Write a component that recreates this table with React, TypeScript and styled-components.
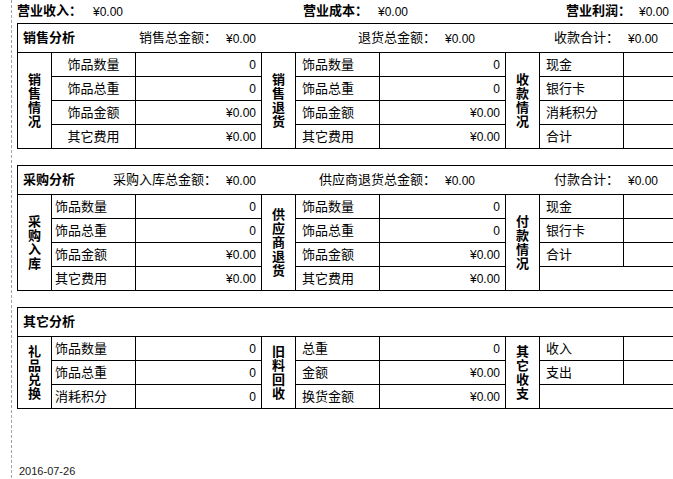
import React from "react";
import styled, { createGlobalStyle } from "styled-components";

const GlobalStyle = createGlobalStyle`
  html, body {
    margin: 0;
    padding: 0;
    overflow: hidden;
    background: #fff;
  }
  body {
    font-family: "Liberation Sans", "Noto Sans CJK SC", sans-serif;
    color: #000;
    line-height: 14px;
  }
`;

const Page = styled.div`
  min-height: 479px;
  padding-left: 17px;
  box-sizing: border-box;
  background-image: repeating-linear-gradient(
    to bottom,
    #a3a3a3 0px,
    #a3a3a3 3px,
    transparent 3px,
    transparent 5px
  );
  background-size: 1px 100%;
  background-position: 11px 0;
  background-repeat: no-repeat;
`;

const TopBar = styled.div`
  display: grid;
  grid-template-columns: 76px 210px 75px 188px 73px 1fr;
  height: 23px;
  align-items: center;
`;

const TopLabel = styled.span`
  font-size: 13px;
  font-weight: bold;
  white-space: nowrap;
  padding-bottom: 2px;
`;

const Money = styled.span`
  font-size: 12px;
  white-space: nowrap;
`;

const Section = styled.section`
  width: 720px;
  border: 1px solid #000;
  margin-bottom: 16px;
`;

const SectionHeader = styled.div`
  display: grid;
  grid-template-columns: 87px 112px 83px 136px 84px 99px 1fr;
  height: 28px;
  align-items: center;
  font-size: 13px;
  white-space: nowrap;
`;

const SectionTitle = styled.span`
  font-weight: bold;
  padding-left: 5px;
`;

const HeaderLabel = styled.span`
  text-align: right;
`;

const HeaderValue = styled(Money)`
  padding-left: 9px;
  padding-top: 1px;
`;

const Table = styled.div<{ $rows: number }>`
  display: grid;
  grid-template-columns: 33px 83px 125px 33px 83px 125px 33px 83px 1fr;
  grid-template-rows: repeat(${(p) => p.$rows}, 23px);
  gap: 1px;
  background: #000;
  border-top: 1px solid #000;
`;

const Cell = styled.div`
  background: #fff;
  display: flex;
  align-items: center;
  white-space: nowrap;
  overflow: hidden;
`;

const GroupLabel = styled(Cell)<{ $span: number }>`
  grid-row: span ${(p) => p.$span};
  flex-direction: column;
  justify-content: center;
  font-size: 13px;
  font-weight: bold;
  line-height: 14px;
`;

const ItemLabel = styled(Cell)<{ $align: "center" | "narrow" | "left" }>`
  font-size: 13px;
  justify-content: ${(p) => (p.$align === "center" ? "center" : "flex-start")};
  padding-left: ${(p) =>
    p.$align === "center" ? "0" : p.$align === "narrow" ? "3px" : "6px"};
`;

const ItemValue = styled(Cell)`
  font-size: 12px;
  justify-content: flex-end;
  padding-right: 5px;
`;

const Filler = styled(Cell)`
  grid-column: span 2;
`;

const DateLine = styled.div`
  margin-top: 56px;
  padding-left: 2px;
  font-size: 11px;
  line-height: 13px;
  color: #1a1a1a;
`;

type Item = { label: string; value?: string };
type Group = { title: string; items: Item[]; align: "center" | "narrow" | "left" };
type SectionData = {
  title: string;
  stats: [string, string][];
  rows: number;
  groups: Group[];
};

const sections: SectionData[] = [
  {
    title: "销售分析",
    stats: [
      ["销售总金额：", "¥0.00"],
      ["退货总金额：", "¥0.00"],
      ["收款合计：", "¥0.00"],
    ],
    rows: 4,
    groups: [
      {
        title: "销售情况",
        align: "center",
        items: [
          { label: "饰品数量", value: "0" },
          { label: "饰品总重", value: "0" },
          { label: "饰品金额", value: "¥0.00" },
          { label: "其它费用", value: "¥0.00" },
        ],
      },
      {
        title: "销售退货",
        align: "left",
        items: [
          { label: "饰品数量", value: "0" },
          { label: "饰品总重", value: "0" },
          { label: "饰品金额", value: "¥0.00" },
          { label: "其它费用", value: "¥0.00" },
        ],
      },
      {
        title: "收款情况",
        align: "left",
        items: [
          { label: "现金", value: "" },
          { label: "银行卡", value: "" },
          { label: "消耗积分", value: "" },
          { label: "合计", value: "" },
        ],
      },
    ],
  },
  {
    title: "采购分析",
    stats: [
      ["采购入库总金额：", "¥0.00"],
      ["供应商退货总金额：", "¥0.00"],
      ["付款合计：", "¥0.00"],
    ],
    rows: 4,
    groups: [
      {
        title: "采购入库",
        align: "narrow",
        items: [
          { label: "饰品数量", value: "0" },
          { label: "饰品总重", value: "0" },
          { label: "饰品金额", value: "¥0.00" },
          { label: "其它费用", value: "¥0.00" },
        ],
      },
      {
        title: "供应商退货",
        align: "left",
        items: [
          { label: "饰品数量", value: "0" },
          { label: "饰品总重", value: "0" },
          { label: "饰品金额", value: "¥0.00" },
          { label: "其它费用", value: "¥0.00" },
        ],
      },
      {
        title: "付款情况",
        align: "left",
        items: [
          { label: "现金", value: "" },
          { label: "银行卡", value: "" },
          { label: "合计", value: "" },
        ],
      },
    ],
  },
  {
    title: "其它分析",
    stats: [],
    rows: 3,
    groups: [
      {
        title: "礼品兑换",
        align: "narrow",
        items: [
          { label: "饰品数量", value: "0" },
          { label: "饰品总重", value: "0" },
          { label: "消耗积分", value: "0" },
        ],
      },
      {
        title: "旧料回收",
        align: "left",
        items: [
          { label: "总重", value: "0" },
          { label: "金额", value: "¥0.00" },
          { label: "换货金额", value: "¥0.00" },
        ],
      },
      {
        title: "其它收支",
        align: "left",
        items: [
          { label: "收入", value: "" },
          { label: "支出", value: "" },
        ],
      },
    ],
  },
];

function renderTable(s: SectionData) {
  const cells: React.ReactNode[] = [];
  for (let r = 0; r < s.rows; r++) {
    s.groups.forEach((g, gi) => {
      if (r === 0) {
        cells.push(
          <GroupLabel key={`g${gi}`} $span={s.rows}>
            {Array.from(g.title).map((ch, i) => (
              <span key={i}>{ch}</span>
            ))}
          </GroupLabel>
        );
      }
      const item = g.items[r];
      if (item) {
        cells.push(
          <ItemLabel key={`l${gi}-${r}`} $align={g.align}>
            {item.label}
          </ItemLabel>
        );
        cells.push(<ItemValue key={`v${gi}-${r}`}>{item.value}</ItemValue>);
      } else {
        cells.push(<Filler key={`f${gi}-${r}`} />);
      }
    });
  }
  return <Table $rows={s.rows}>{cells}</Table>;
}

export default function App() {
  return (
    <>
      <GlobalStyle />
      <Page>
        <TopBar>
          <TopLabel>营业收入：</TopLabel>
          <Money>¥0.00</Money>
          <TopLabel>营业成本：</TopLabel>
          <Money>¥0.00</Money>
          <TopLabel>营业利润：</TopLabel>
          <Money>¥0.00</Money>
        </TopBar>
        {sections.map((s) => (
          <Section key={s.title}>
            <SectionHeader>
              <SectionTitle>{s.title}</SectionTitle>
              {s.stats.map(([label, value], i) => (
                <React.Fragment key={i}>
                  <HeaderLabel>{label}</HeaderLabel>
                  <HeaderValue>{value}</HeaderValue>
                </React.Fragment>
              ))}
            </SectionHeader>
            {renderTable(s)}
          </Section>
        ))}
        <DateLine>2016-07-26</DateLine>
      </Page>
    </>
  );
}
